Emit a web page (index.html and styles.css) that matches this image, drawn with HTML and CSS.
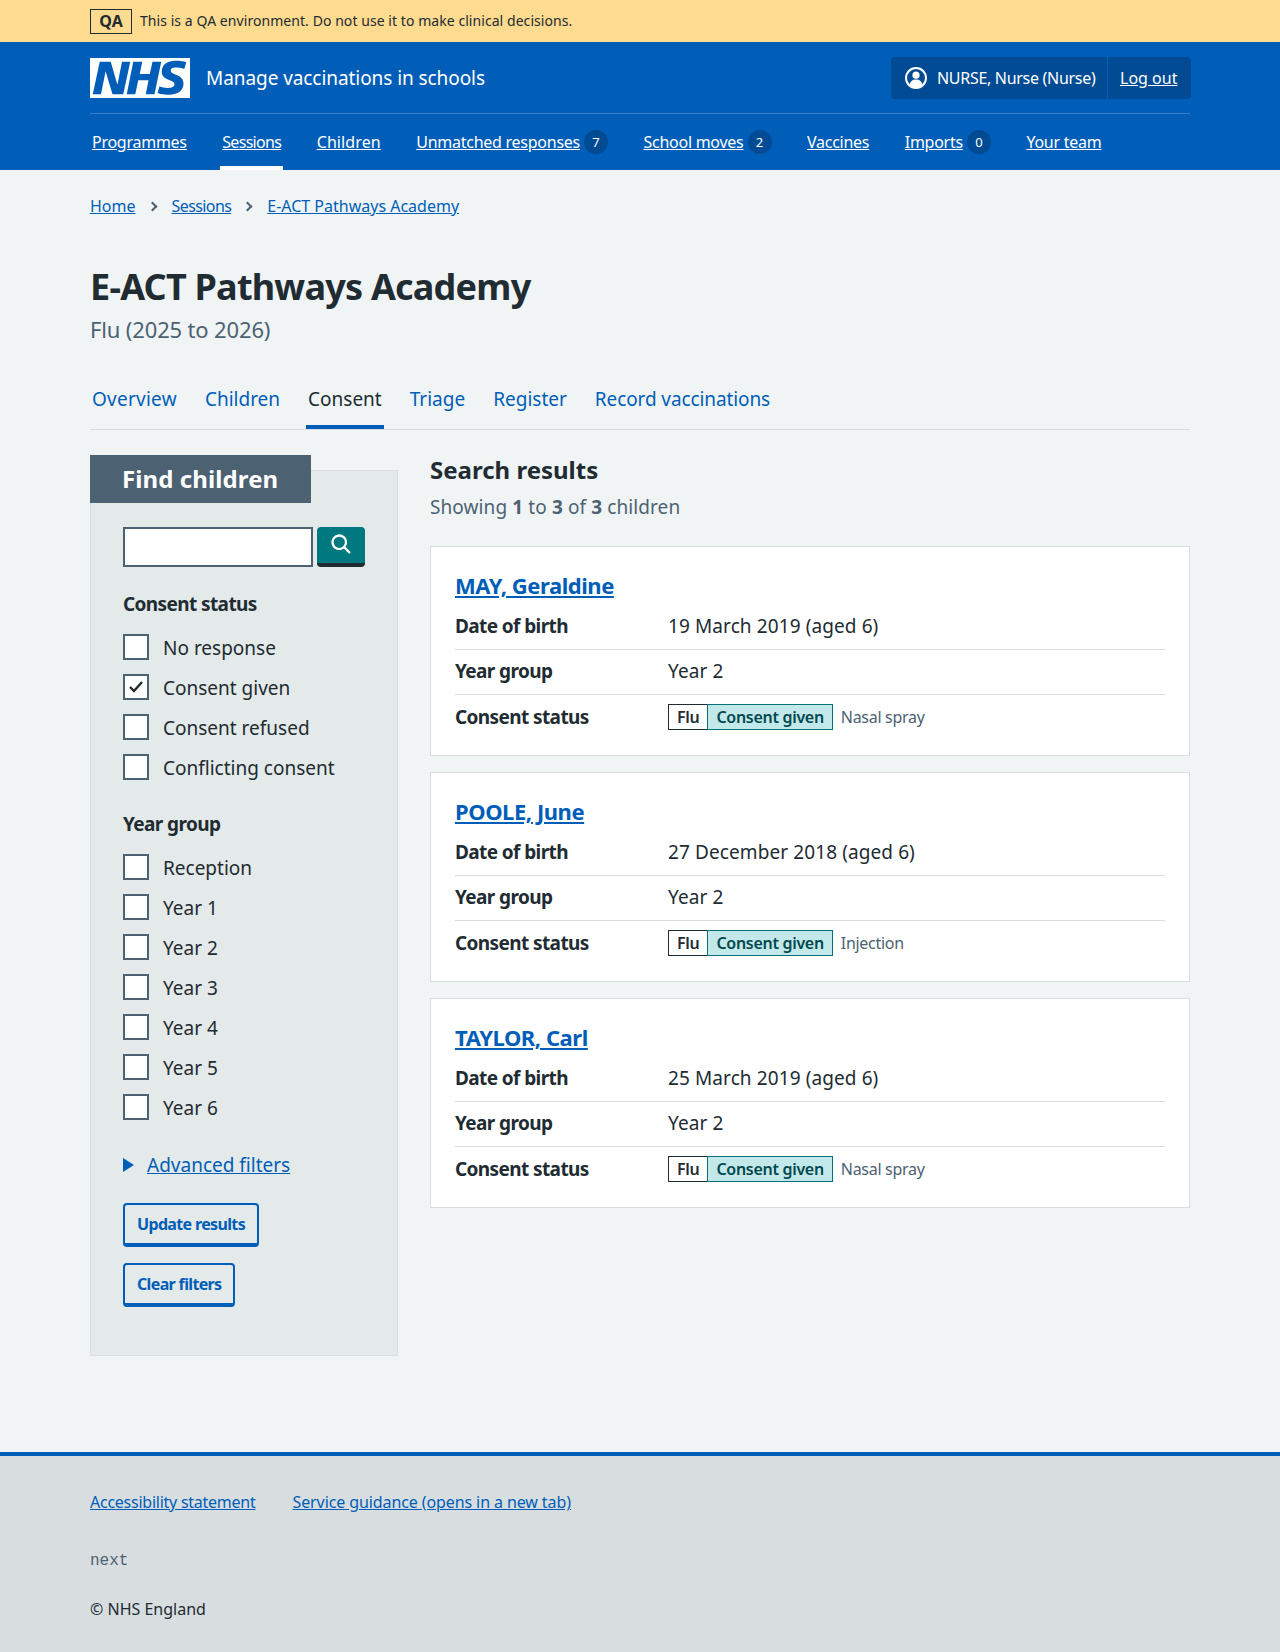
FILE: index.html
```html
<!DOCTYPE html>
<html lang="en">
<head>
    <title>Consent – E-ACT Pathways Academy</title>
    <link rel="stylesheet" href="styles.css">
</head>
<body>
    <div class="env-bar">
        <div class="container env-inner">
            <strong class="env-tag">QA</strong>
            <span>This is a QA environment. Do not use it to make clinical decisions.</span>
        </div>
    </div>

    <header class="header">
        <div class="container">
            <div class="header-top">
                <a class="brand" href="#">
                    <svg class="logo" viewBox="0 0 40 16" aria-label="NHS">
                        <path fill="#fff" d="M0 0h40v16H0z"/>
                        <path fill="#005eb8" d="M3.9 1.5h4.4l2.6 9h.1l1.8-9h3.3l-2.8 13H9l-2.7-9h-.1l-1.8 9H1.1M17.3 1.5h3.6l-1 4.9h4L25 1.5h3.5l-2.7 13h-3.5l1.1-5.6h-4.1l-1.2 5.6h-3.4M37.7 4.4c-.7-.3-1.6-.6-2.9-.6-1.4 0-2.5.2-2.5 1.3 0 1.8 5.1 1.2 5.1 5.1 0 3.6-3.3 4.5-6.4 4.5-1.3 0-2.9-.3-4-.7l.8-2.7c.7.4 2.1.7 3.2.7s2.8-.2 2.8-1.5c0-2.1-5.1-1.3-5.1-5 0-3.4 2.9-4.4 5.8-4.4 1.6 0 3.1.2 4 .6"/>
                    </svg>
                    <span class="service-name">Manage vaccinations in schools</span>
                </a>
                <div class="account">
                    <div class="account-user">
                        <svg class="account-icon" viewBox="0 0 24 24">
                            <circle cx="12" cy="12" r="10" fill="none" stroke="#fff" stroke-width="2"/>
                            <circle cx="12" cy="9.2" r="3.6" fill="#fff"/>
                            <path fill="#fff" d="M5.6 19.2c.3-3.6 2.9-5.6 6.4-5.6s6.1 2 6.4 5.6A10 10 0 0 1 12 22a10 10 0 0 1-6.4-2.8z"/>
                        </svg>
                        <span>NURSE, Nurse (Nurse)</span>
                    </div>
                    <a class="account-logout" href="#">Log out</a>
                </div>
            </div>
            <nav class="main-nav">
                <a href="#">Programmes</a>
                <a class="is-active" href="#">Sessions</a>
                <a class="nav-children" href="#">Children</a>
                <span class="nav-item"><a href="#">Unmatched responses</a><span class="count">7</span></span>
                <span class="nav-item"><a href="#">School moves</a><span class="count">2</span></span>
                <a href="#">Vaccines</a>
                <span class="nav-item"><a href="#">Imports</a><span class="count">0</span></span>
                <a href="#">Your team</a>
            </nav>
        </div>
    </header>

    <div class="container">
        <nav class="breadcrumb">
            <a href="#">Home</a>
            <span class="crumb-sep"></span>
            <a class="crumb-narrow" href="#">Sessions</a>
            <span class="crumb-sep"></span>
            <a href="#">E-ACT Pathways Academy</a>
        </nav>

        <main>
            <h1 class="page-title">E-ACT Pathways Academy</h1>
            <p class="page-caption">Flu (2025 to 2026)</p>

            <nav class="sub-nav">
                <a href="#">Overview</a>
                <a href="#">Children</a>
                <a class="is-current" href="#">Consent</a>
                <a href="#">Triage</a>
                <a href="#">Register</a>
                <a href="#">Record vaccinations</a>
            </nav>

            <div class="columns">
                <aside class="filters">
                    <h2 class="filters-heading">Find children</h2>
                    <div class="filters-body">
                        <div class="search">
                            <input class="search-input" type="text" aria-label="Search">
                            <button class="search-button" type="button" aria-label="Search">
                                <svg viewBox="0 0 24 24" width="27" height="27"><path fill="#fff" d="M19.71 18.29l-4.11-4.1a7 7 0 1 0-1.41 1.41l4.1 4.11a1 1 0 0 0 1.42 0 1 1 0 0 0 0-1.42zM5 10a5 5 0 1 1 5 5 5 5 0 0 1-5-5z"/></svg>
                            </button>
                        </div>

                        <fieldset class="group">
                            <legend class="group-title">Consent status</legend>
                            <label class="check"><input type="checkbox"><span>No response</span></label>
                            <label class="check"><input type="checkbox" checked><span>Consent given</span></label>
                            <label class="check"><input type="checkbox"><span>Consent refused</span></label>
                            <label class="check"><input type="checkbox"><span>Conflicting consent</span></label>
                        </fieldset>

                        <fieldset class="group">
                            <legend class="group-title">Year group</legend>
                            <label class="check"><input type="checkbox"><span>Reception</span></label>
                            <label class="check"><input type="checkbox"><span>Year 1</span></label>
                            <label class="check"><input type="checkbox"><span>Year 2</span></label>
                            <label class="check"><input type="checkbox"><span>Year 3</span></label>
                            <label class="check"><input type="checkbox"><span>Year 4</span></label>
                            <label class="check"><input type="checkbox"><span>Year 5</span></label>
                            <label class="check"><input type="checkbox"><span>Year 6</span></label>
                        </fieldset>

                        <div class="advanced">
                            <span class="advanced-arrow"></span>
                            <a href="#">Advanced filters</a>
                        </div>

                        <button class="btn" type="button">Update results</button>
                        <button class="btn" type="button">Clear filters</button>
                    </div>
                </aside>

                <section class="results">
                    <h2 class="results-title">Search results</h2>
                    <p class="results-count">Showing <b>1</b> to <b>3</b> of <b>3</b> children</p>

                    <article class="card">
                        <h3 class="card-title"><a href="#">MAY, Geraldine</a></h3>
                        <dl class="summary">
                            <div class="summary-row"><dt>Date of birth</dt><dd>19 March 2019 (aged 6)</dd></div>
                            <div class="summary-row"><dt>Year group</dt><dd>Year 2</dd></div>
                            <div class="summary-row"><dt>Consent status</dt><dd class="status"><span class="tag">Flu</span><span class="tag tag-given">Consent given</span><span class="method">Nasal spray</span></dd></div>
                        </dl>
                    </article>

                    <article class="card">
                        <h3 class="card-title"><a href="#">POOLE, June</a></h3>
                        <dl class="summary">
                            <div class="summary-row"><dt>Date of birth</dt><dd>27 December 2018 (aged 6)</dd></div>
                            <div class="summary-row"><dt>Year group</dt><dd>Year 2</dd></div>
                            <div class="summary-row"><dt>Consent status</dt><dd class="status"><span class="tag">Flu</span><span class="tag tag-given">Consent given</span><span class="method">Injection</span></dd></div>
                        </dl>
                    </article>

                    <article class="card">
                        <h3 class="card-title"><a href="#">TAYLOR, Carl</a></h3>
                        <dl class="summary">
                            <div class="summary-row"><dt>Date of birth</dt><dd>25 March 2019 (aged 6)</dd></div>
                            <div class="summary-row"><dt>Year group</dt><dd>Year 2</dd></div>
                            <div class="summary-row"><dt>Consent status</dt><dd class="status"><span class="tag">Flu</span><span class="tag tag-given">Consent given</span><span class="method">Nasal spray</span></dd></div>
                        </dl>
                    </article>
                </section>
            </div>
        </main>
    </div>

    <footer class="footer">
        <div class="container">
            <div class="footer-links">
                <a href="#">Accessibility statement</a>
                <a href="#">Service guidance (opens in a new tab)</a>
            </div>
            <p class="footer-version">next</p>
            <p class="footer-copy">© NHS England</p>
        </div>
    </footer>
</body>
</html>
```

FILE: styles.css
```css
* {
    box-sizing: border-box;
}

body {
    margin: 0;
    background-color: #f0f4f5;
    color: #212b32;
    font-family: "Noto Sans", Arial, sans-serif;
    font-size: 19px;
    line-height: 28px;
}

a {
    color: #005eb8;
}

.container {
    width: 1100px;
    margin: 0 auto;
}

/* environment banner */
.env-bar {
    height: 42px;
    background-color: #ffdb8f;
    font-size: 14px;
    letter-spacing: 0.06px;
    color: #212b32;
}

.env-inner {
    display: flex;
    align-items: center;
    gap: 8px;
    height: 42px;
}

.env-tag {
    width: 42px;
    height: 25px;
    border: 1px solid #212b32;
    font-size: 16px;
    line-height: 23px;
    text-align: center;
}

/* header */
.header {
    height: 128px;
    background-color: #005eb8;
    color: #fff;
}

.header a {
    color: #fff;
}

.header-top {
    display: flex;
    justify-content: space-between;
    align-items: center;
    height: 72px;
    padding-top: 1px;
    border-bottom: 1px solid #3b80c6;
}

.brand {
    display: flex;
    align-items: center;
    gap: 16px;
    text-decoration: none;
}

.logo {
    display: block;
    width: 100px;
    height: 40px;
}

.service-name {
    font-size: 19px;
    letter-spacing: -0.07px;
}

.account {
    display: flex;
    width: 300px;
    height: 42px;
    margin-right: -1px;
    background-color: #004b93;
    border-radius: 4px;
    font-size: 16px;
}

.account-user {
    display: flex;
    align-items: center;
    gap: 9px;
    width: 217px;
    padding-left: 13px;
    border-right: 1px solid #005eb8;
    letter-spacing: -0.3px;
}

.account-icon {
    width: 24px;
    height: 24px;
}

.account-logout {
    padding: 7px 12px;
}

.main-nav {
    display: flex;
    align-items: center;
    gap: 35.5px;
    height: 56px;
    padding-left: 2px;
    font-size: 16px;
    letter-spacing: -0.26px;
}

.main-nav > a,
.nav-item {
    display: flex;
    align-items: center;
    height: 56px;
    position: relative;
}

.main-nav .is-active {
    letter-spacing: -0.7px;
}

.main-nav .nav-children {
    letter-spacing: 0.1px;
}

.main-nav .is-active::after {
    content: "";
    position: absolute;
    left: -2px;
    right: -2px;
    bottom: 0;
    height: 4px;
    background-color: #fff;
}

.count {
    width: 24px;
    height: 24px;
    margin-left: 4px;
    border-radius: 50%;
    background-color: #004b93;
    font-size: 13px;
    line-height: 24px;
    letter-spacing: 0;
    text-align: center;
}

/* breadcrumb */
.breadcrumb {
    display: flex;
    align-items: center;
    height: 72px;
    font-size: 16px;
}

.crumb-narrow {
    letter-spacing: -0.6px;
}

.crumb-sep {
    width: 7px;
    height: 7px;
    margin: 0 16px 0 13px;
    border-top: 2px solid #4c6272;
    border-right: 2px solid #4c6272;
    transform: rotate(45deg);
}

/* page heading */
.page-title {
    margin: 23px 0 0;
    font-size: 36px;
    line-height: 44px;
    letter-spacing: -0.77px;
}

.page-caption {
    margin: 5px 0 0;
    color: #4c6272;
    font-size: 22px;
    line-height: 30px;
    letter-spacing: -0.15px;
}

/* secondary navigation */
.sub-nav {
    display: flex;
    gap: 28px;
    height: 60px;
    margin-top: 26px;
    padding-left: 2px;
    border-bottom: 1px solid #d8dde0;
}

.sub-nav a {
    padding-top: 15px;
    text-decoration: none;
}

.sub-nav a:first-child {
    letter-spacing: 0.25px;
}

.sub-nav a:last-child {
    letter-spacing: -0.1px;
}

.sub-nav .is-current {
    margin: 0 -2px;
    padding: 15px 2px 0;
    border-bottom: 4px solid #005eb8;
    color: #212b32;
}

.columns {
    display: flex;
    gap: 32px;
    padding-top: 24px;
    padding-bottom: 96px;
}

/* filters panel */
.filters {
    position: relative;
    width: 308px;
    height: 886px;
    margin-top: 16px;
    border: 1px solid #d8dde0;
    background-color: #e4e9e9;
}

.filters-heading {
    position: absolute;
    top: -16px;
    left: -1px;
    width: 221px;
    height: 48px;
    margin: 0;
    padding-left: 32px;
    background-color: #4c6272;
    color: #fff;
    font-size: 24px;
    line-height: 48px;
    letter-spacing: 0.1px;
}

.filters-body {
    padding: 56px 32px 0;
}

.search {
    display: flex;
    gap: 4px;
}

.search-input {
    width: 190px;
    height: 40px;
    border: 2px solid #4c6272;
    background-color: #fff;
}

.search-button {
    display: flex;
    align-items: center;
    justify-content: center;
    width: 48px;
    height: 40px;
    padding: 0 0 2px 1px;
    border: none;
    border-bottom: 4px solid #212b32;
    border-radius: 4px;
    background-color: #00787f;
}

.group {
    margin: 23px 0 0;
    padding: 0;
    border: none;
}

.group-title {
    display: block;
    padding: 0;
    margin-top: 22px;
    margin-bottom: 9px;
    font-weight: 700;
    letter-spacing: -0.6px;
}

.check {
    display: flex;
    align-items: center;
    gap: 14px;
    height: 40px;
}

.check span {
    padding-top: 2px;
}

.check input {
    appearance: none;
    width: 26px;
    height: 26px;
    margin: 0;
    border: 2px solid #4c6272;
    background-color: #fff;
}

.check input:checked {
    background: #fff url("data:image/svg+xml,%3Csvg xmlns='http://www.w3.org/2000/svg' viewBox='0 0 22 22'%3E%3Cpath d='M5 11l4 4 8-9' fill='none' stroke='%23212b32' stroke-width='2.4'/%3E%3C/svg%3E") center no-repeat;
}

.advanced {
    display: flex;
    align-items: center;
    gap: 13px;
    margin-top: 24px;
    margin-bottom: 24px;
}

.advanced-arrow {
    width: 0;
    height: 0;
    border-left: 11px solid #005eb8;
    border-top: 7px solid transparent;
    border-bottom: 7px solid transparent;
}

.btn {
    display: block;
    height: 44px;
    margin-bottom: 16px;
    padding: 0 12px;
    border: 2px solid #005eb8;
    border-bottom-width: 4px;
    border-radius: 4px;
    background: transparent;
    color: #005eb8;
    font-family: inherit;
    font-size: 16px;
    font-weight: 700;
    letter-spacing: -0.65px;
}

/* results */
.results {
    flex: 1;
}

.results-title {
    margin: 0;
    font-size: 24px;
    line-height: 32px;
}

.results-count {
    margin: 7px 0 25px;
    color: #4c6272;
    letter-spacing: 0.1px;
}

.card {
    margin-bottom: 16px;
    padding: 22px 24px 24px;
    border: 1px solid #d8dde0;
    background-color: #fff;
}

.card-title {
    margin: 0 0 4px;
    font-size: 22px;
    line-height: 32px;
    letter-spacing: -0.45px;
}

.summary {
    margin: 0;
}

.summary-row {
    display: flex;
    padding: 7px 0 9px;
    border-bottom: 1px solid #d8dde0;
}

.summary-row:last-child {
    border-bottom: none;
    padding: 8px 0 0;
}

.summary dt {
    width: 213px;
    font-weight: 700;
    letter-spacing: -0.6px;
}

.summary dd {
    margin: 0;
    letter-spacing: 0.1px;
}

.summary .status {
    display: flex;
    align-items: center;
    letter-spacing: -0.3px;
}

.tag {
    height: 26px;
    padding: 0 8px;
    border: 1px solid #212b32;
    background-color: #fff;
    font-size: 16px;
    font-weight: 600;
    line-height: 24px;
}

.tag-given {
    margin-left: -1px;
    border-color: #00727a;
    background-color: #c3e8ea;
    color: #00484d;
}

.method {
    margin-left: 8px;
    color: #4c6272;
    font-size: 16px;
}

/* footer */
.footer {
    height: 200px;
    padding-top: 32px;
    border-top: 4px solid #005eb8;
    background-color: #d8dde0;
    font-size: 16px;
}

.footer-links {
    display: flex;
    gap: 37px;
    letter-spacing: -0.1px;
}

.footer-links a:first-child {
    letter-spacing: -0.25px;
}

.footer-version {
    margin: 31px 0 0;
    color: #4c6272;
    font-family: "Liberation Mono", monospace;
    font-size: 16px;
}

.footer-copy {
    margin: 20px 0 0;
}
```
